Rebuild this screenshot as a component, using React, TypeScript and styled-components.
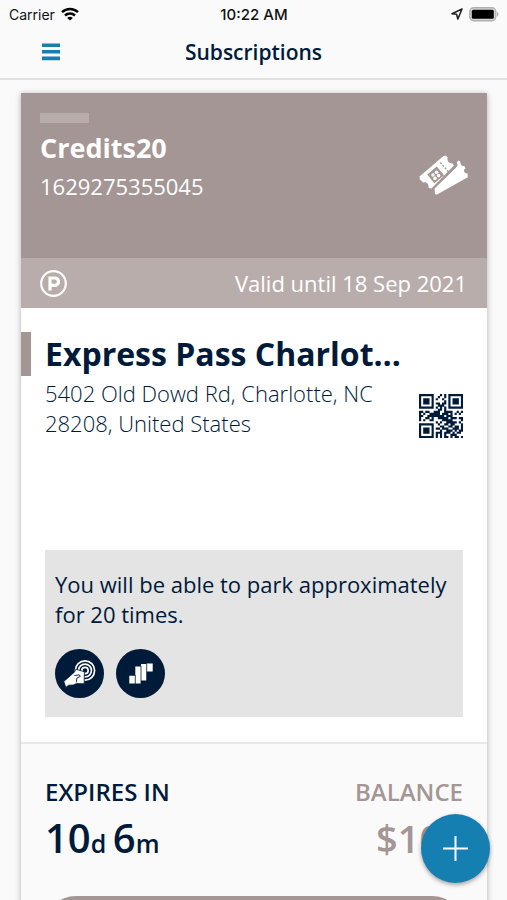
import React from "react";
import styled, { createGlobalStyle } from "styled-components";

const navy = "#001a3a";
const blue = "#167fb2";
const taupe = "#a49694";

const GlobalStyle = createGlobalStyle`
  *, *::before, *::after { box-sizing: border-box; }
  body {
    margin: 0;
    background: #fafafa;
    color: ${navy};
    font-family: "Open Sans", "Noto Sans", sans-serif;
  }
  h1, h2, h3, p, dl, dt, dd { margin: 0; }
`;

const Screen = styled.div`
  display: flex;
  flex-direction: column;
  height: 100vh;
  overflow: hidden;
`;

const StatusBar = styled.div`
  display: grid;
  grid-template-columns: 1fr auto 1fr;
  align-items: center;
  height: 28px;
  padding: 0 8px 0 9px;
  font-family: Inter, "Liberation Sans", sans-serif;
  font-size: 14px;
  color: #111;
`;

const StatusGroup = styled.div<{ $end?: boolean }>`
  display: flex;
  align-items: center;
  gap: 6px;
  justify-content: ${(p) => (p.$end ? "flex-end" : "flex-start")};
`;

const Clock = styled.time`
  font-size: 15px;
  font-weight: 500;
`;

const AppBar = styled.header`
  display: grid;
  grid-template-columns: 1fr auto 1fr;
  align-items: center;
  height: 52px;
  flex: none;
  padding: 0 36px 2px;
  border-bottom: 2px solid #e1e1e1;
`;

const MenuButton = styled.button`
  display: flex;
  width: 30px;
  padding: 6px;
  border: 0;
  background: none;
  color: ${blue};
`;

const Title = styled.h1`
  font-size: 21px;
  font-weight: 600;
  line-height: 28px;
`;

const Content = styled.main`
  flex: 1;
  min-height: 0;
  overflow-y: auto;
  scrollbar-width: none;
  padding: 13px 20px 24px 21px;
`;

const Card = styled.article`
  background: #fff;
  box-shadow: 0 1px 6px rgba(0, 0, 0, 0.3);
`;

const Banner = styled.div`
  display: flex;
  align-items: center;
  justify-content: space-between;
  height: 165px;
  padding: 0 19px;
  background: ${taupe};
  color: #fff;
`;

const BannerText = styled.div`
  align-self: flex-start;
  padding-top: 20px;
`;

const Tag = styled.div`
  width: 49px;
  height: 10px;
  margin-bottom: 7px;
  background: #b9adab;
`;

const PlanName = styled.h2`
  font-size: 27px;
  font-weight: 700;
  line-height: 36px;
`;

const PlanNumber = styled.p`
  margin-top: 5px;
  font-size: 22px;
  line-height: 30px;
`;

const ValidityBar = styled.div`
  display: flex;
  align-items: center;
  justify-content: space-between;
  height: 50px;
  padding: 0 20px 0 19px;
  background: #b9adab;
  color: #fff;
  font-size: 22px;
`;

const Details = styled.section`
  padding: 24px 24px 25px;
  border-bottom: 2px solid #e8e8e8;
`;

const PlaceName = styled.h3`
  margin-left: -24px;
  padding: 0 60px 0 14px;
  border-left: 10px solid ${taupe};
  font-size: 32px;
  font-weight: 700;
  line-height: 44px;
  white-space: nowrap;
  overflow: hidden;
  text-overflow: ellipsis;
`;

const AddressRow = styled.div`
  display: flex;
  align-items: flex-start;
  justify-content: space-between;
  min-height: 174px;
  padding-top: 2px;
`;

const Address = styled.p`
  max-width: 340px;
  font-size: 22px;
  font-weight: 300;
  line-height: 30px;
`;

const CodeButton = styled.button`
  display: flex;
  flex: none;
  margin-top: 16px;
  padding: 0;
  border: 0;
  background: none;
  color: ${navy};
`;

const Notice = styled.div`
  padding: 19px 10px;
  background: #e4e4e4;
  font-size: 22px;
  line-height: 30px;
`;

const Badges = styled.div`
  display: flex;
  gap: 12px;
  margin-top: 20px;
`;

const Badge = styled.span`
  display: flex;
  align-items: center;
  justify-content: center;
  width: 49px;
  height: 49px;
  border-radius: 50%;
  background: ${navy};
  color: #fff;
`;

const Footer = styled.section`
  padding: 32px 24px;
  background: #fafafa;
`;

const Stats = styled.dl`
  display: flex;
  justify-content: space-between;
`;

const Stat = styled.div<{ $muted?: boolean }>`
  color: ${(p) => (p.$muted ? taupe : navy)};
  text-align: ${(p) => (p.$muted ? "right" : "left")};
`;

const StatLabel = styled.dt`
  font-size: 24px;
  font-weight: 600;
  line-height: 32px;
`;

const StatValue = styled.dd<{ $compact?: boolean }>`
  font-size: ${(p) => (p.$compact ? 38 : 40)}px;
  font-weight: 600;
  line-height: 60px;
`;

const Unit = styled.span`
  font-size: 25px;
  line-height: 1;
`;

const ActionButton = styled.button`
  display: block;
  width: 100%;
  height: 62px;
  margin-top: 28px;
  border: 0;
  border-radius: 31px;
  background: ${taupe};
`;

const AddButton = styled.button`
  position: fixed;
  right: 17px;
  bottom: 17px;
  display: flex;
  align-items: center;
  justify-content: center;
  width: 69px;
  height: 69px;
  padding: 0;
  border: 0;
  border-radius: 50%;
  background: ${blue};
  color: #fff;
  box-shadow: 0 2px 4px rgba(0, 0, 0, 0.35);
`;

const WifiIcon = () => (
  <svg width="18" height="14" viewBox="0 0 18 14" fill="none" stroke="#000" strokeWidth="2.5" aria-label="Wi-Fi">
    <path d="M1 5.2C5.4.9 12.6.9 17 5.2" />
    <path d="M4 8.5c2.8-2.7 7.2-2.7 10 0" />
    <path d="M9 13.6 6.2 10.9c1.6-1.4 4-1.4 5.6 0z" fill="#000" stroke="none" />
  </svg>
);

const LocationIcon = () => (
  <svg width="12" height="12" viewBox="0 0 12 12" fill="none" stroke="#222" strokeWidth="1.5" strokeLinejoin="round" aria-label="Location">
    <path d="M11 1 1 5.8l4.6.4 1.2 4.9z" />
  </svg>
);

const BatteryIcon = () => (
  <svg width="30" height="15" viewBox="0 0 30 15" aria-label="Battery full">
    <rect x="0.8" y="0.8" width="26" height="13" rx="4" fill="#d8d8d8" stroke="#b0b0b0" strokeWidth="1.4" />
    <rect x="2.8" y="2.8" width="22" height="9" rx="1.5" fill="#000" />
    <path d="M28 5v4.6c1.9-.7 1.9-3.9 0-4.6z" fill="#aaa" />
  </svg>
);

const MenuIcon = () => (
  <svg width="18" height="18" viewBox="0 0 18 18" fill="currentColor">
    <path d="M0 0.5h18v3.6H0zM0 7h18v3.6H0zM0 13.6h18v3.6H0z" />
  </svg>
);

const TicketsIcon = () => (
  <svg width="49" height="41" viewBox="0 0 49 41" role="img" aria-label="Tickets">
    <path
      d="M.5 21.5 24.5 1l2-.6 2.2 2.2c-1 3.6 1.4 6.2 4.6 5.6l1.6 2.2L12.5 33.6l-3-.6c.6-4-1.6-6.6-5.4-5.6L.8 24.6z"
      fill="#fff"
    />
    <path d="m8.3 19.4 9.4-7.9 7.4 8.7-9.8 8z" fill={taupe} />
    <g fill="#fff">
      <circle cx="14" cy="20" r="1.8" />
      <circle cx="17.6" cy="17.2" r="1.8" />
      <circle cx="16" cy="23.4" r="1.8" />
      <circle cx="19.6" cy="20.6" r="1.8" />
    </g>
    <path d="m21.2 7.4 8.6 9.8" stroke={taupe} strokeWidth="1.3" strokeDasharray="2 1.5" />
    <path
      d="M36.4 13.2c2.8-2.3 2.5-3.8 1.2-5.4l1.6-2.2 2.4 1.2c-.4 3 1 4.6 3.8 4.2l1.2 2.2-1.6 1.6c-.2 2.4 1 3.4 3.6 3.8l.2 3.6-31.2 17.6-1.6-.8-.4-5.4z"
      fill="#fff"
    />
  </svg>
);

const ParkingIcon = () => (
  <svg width="27" height="27" viewBox="0 0 27 27" fill="none" stroke="#fff" role="img" aria-label="Parking">
    <circle cx="13.5" cy="13.5" r="12.3" strokeWidth="2.2" />
    <path d="M10 20.5V8h4.8c4.9 0 4.9 7.4 0 7.4H10" strokeWidth="3.2" />
  </svg>
);

const qrRows = [
  "111111100010101111111",
  "100000100100101000001",
  "101110101001001011101",
  "101110100000101011101",
  "101110101101101011101",
  "100000100111001000001",
  "111111101010101111111",
  "000000000110100000000",
  "110110011100111100101",
  "101001111101110101010",
  "110011111111011100000",
  "100110100111110111011",
  "101001100001111100001",
  "000000001010011111010",
  "111111100100110110001",
  "100000100011001101101",
  "101110101101110011101",
  "101110100010011101011",
  "101110101110111010110",
  "100000101010100111000",
  "111111101010110101101",
];

const QrIcon = () => (
  <svg width="44" height="44" viewBox="0 0 21 21">
    <path
      fill="currentColor"
      d={qrRows
        .flatMap((row, y) => [...row].map((c, x) => (c === "1" ? `M${x} ${y}h1.03v1.03h-1.03z` : "")))
        .join("")}
    />
  </svg>
);

const TapCardIcon = () => (
  <svg width="33" height="28" viewBox="0 0 33 28" role="img" aria-label="Tap card">
    <g fill="none" stroke="#fff" strokeWidth="1.7">
      <circle cx="22" cy="10.5" r="9.6" />
      <circle cx="22" cy="10.5" r="6.4" />
      <circle cx="22" cy="10.5" r="3.2" />
    </g>
    <path
      d="M.8 21.5 7.4 15.7 11.6 12l1.2-2.8 8.6 2.6-.2 12-7.6-.2-3.4 1.4-4.6.2L2.8 27.4z"
      fill="#fff"
      stroke={navy}
      strokeWidth="0.8"
    />
    <path d="m11.3 15.6 5-.8 1 1.6-3.4 1.6-.6 4.4" fill="none" stroke={navy} strokeWidth="0.9" />
  </svg>
);

const BarsIcon = () => (
  <svg width="24" height="21" viewBox="0 0 24 21" fill="#fff" role="img" aria-label="Usage">
    <path d="M0.3 12.7h6v7.8h-6zM6.3 3.6h5.7v16.9H6.3zM12 1h5.7v16.5H12zM17.7.5h6v8.1h-6z" />
    <path d="M6.3 12v9M12 3v18M17.7 1v17" stroke={navy} strokeWidth=".8" />
  </svg>
);

const PlusIcon = () => (
  <svg width="25" height="25" viewBox="0 0 25 25" stroke="currentColor" strokeWidth="2">
    <path d="M12.5 0v25M0 12.5h25" />
  </svg>
);

export default function App() {
  return (
    <Screen>
      <GlobalStyle />
      <StatusBar>
        <StatusGroup>
          <span>Carrier</span>
          <WifiIcon />
        </StatusGroup>
        <Clock>10:22 AM</Clock>
        <StatusGroup $end>
          <LocationIcon />
          <BatteryIcon />
        </StatusGroup>
      </StatusBar>
      <AppBar>
        <MenuButton type="button" aria-label="Menu">
          <MenuIcon />
        </MenuButton>
        <Title>Subscriptions</Title>
      </AppBar>
      <Content>
        <Card>
          <Banner>
            <BannerText>
              <Tag />
              <PlanName>Credits20</PlanName>
              <PlanNumber>1629275355045</PlanNumber>
            </BannerText>
            <TicketsIcon />
          </Banner>
          <ValidityBar>
            <ParkingIcon />
            <span>Valid until 18 Sep 2021</span>
          </ValidityBar>
          <Details>
            <PlaceName>Express Pass Charlotte</PlaceName>
            <AddressRow>
              <Address>5402 Old Dowd Rd, Charlotte, NC 28208, United States</Address>
              <CodeButton type="button" aria-label="Show QR code">
                <QrIcon />
              </CodeButton>
            </AddressRow>
            <Notice>
              <p>You will be able to park approximately for 20 times.</p>
              <Badges>
                <Badge>
                  <TapCardIcon />
                </Badge>
                <Badge>
                  <BarsIcon />
                </Badge>
              </Badges>
            </Notice>
          </Details>
          <Footer>
            <Stats>
              <Stat>
                <StatLabel>EXPIRES IN</StatLabel>
                <StatValue>
                  10<Unit>d </Unit>6<Unit>m</Unit>
                </StatValue>
              </Stat>
              <Stat $muted>
                <StatLabel>BALANCE</StatLabel>
                <StatValue $compact>$100</StatValue>
              </Stat>
            </Stats>
            <ActionButton type="button" aria-label="Renew" />
          </Footer>
        </Card>
      </Content>
      <AddButton type="button" aria-label="Add">
        <PlusIcon />
      </AddButton>
    </Screen>
  );
}
